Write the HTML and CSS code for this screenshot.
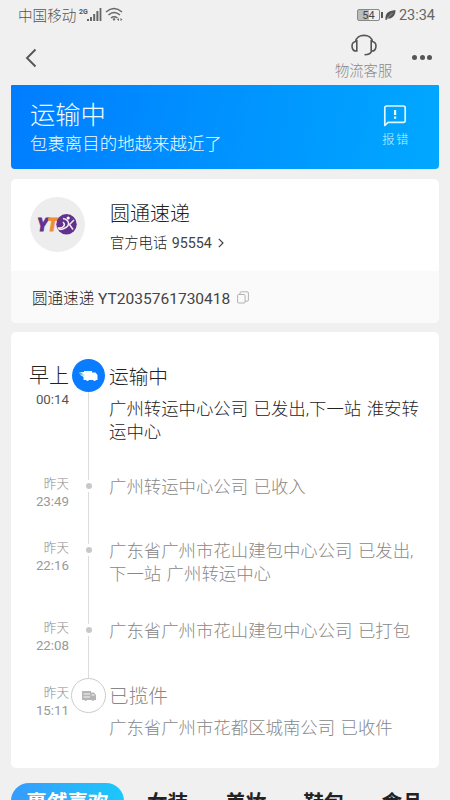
FILE: index.html
```html
<!DOCTYPE html>
<html lang="zh-CN">
<head>
<meta charset="utf-8">
<title>物流详情</title>
<link rel="stylesheet" href="styles.css">
</head>
<body>
<div class="screen">
  <header class="status">
    <span class="carrier">中国移动</span>
    <svg class="signal" width="48" height="16" viewBox="0 0 48 16">
      <text x="1" y="6.500" class="net">2G</text>
      <g fill="#666"><path d="M9 12h2v2H9zM12 10h2v4h-2zM15.200 7h2v7h-2zM18.400 4h2v10h-2zM21.600 1h1.800v13h-1.800z"/></g>
      <g fill="none" stroke="#666" stroke-width="1.500"><path d="M28 5q8-7 16 0M30.500 8q5.500-5 11.500 0M33 11q3-2.500 6.500 0"/></g>
      <path fill="#666" d="M34.500 12l1.500-1 1.500 1-1.500 2zM39 12.500l2-1.500v3zM44.500 12.500l-2-1.500v3z"/>
    </svg>
    <span class="space"></span>
    <span class="battery">54</span><span class="cap"></span>
    <svg class="leaf" width="11" height="12" viewBox="0 0 11 12"><path fill="#555" d="M.5 11C0 4 3 2 10.500 1 10.500 7 7 10 2.500 9.500L1.500 11z"/><path d="M2 9.500L7.500 4" stroke="#ccc" stroke-width=".6"/></svg>
    <span class="clock">23:34</span>
  </header>

  <nav class="navbar">
    <svg class="back" width="14" height="20" viewBox="0 0 14 20"><path d="M11.500 1.500L3 10l8.500 8.500" fill="none" stroke="#555" stroke-width="1.900"/></svg>
    <span class="space"></span>
    <div class="service">
      <svg width="26" height="22" viewBox="0 0 26 22" fill="none" stroke="#555" stroke-width="1.600">
        <path d="M4.500 8C5.500-.9 20.500-.9 21.500 8M5.800 7v10C0 17.500-.5 8.500 4.500 7.500zM20.200 7v10c5.800.5 6.300-8.500 1.300-9.500zM21 16.500c-1 3-3.500 4.300-7.500 4.300"/>
      </svg>
      <span>物流客服</span>
    </div>
    <div class="more"><i></i><i></i><i></i></div>
  </nav>

  <main>
    <section class="banner">
      <div class="banner-text">
        <h1>运输中</h1>
        <p>包裹离目的地越来越近了</p>
      </div>
      <div class="report">
        <svg width="24" height="24" viewBox="0 0 24 24"><path d="M1.800 21.500V3.800q0-1.800 1.800-1.800h16.800q1.800 0 1.800 1.800v12.700q0 1.800-1.800 1.800H5z" fill="none" stroke="#dff8ff" stroke-width="1.700" stroke-linejoin="round"/><path d="M11 6h2.200v5H11zM11 12.500h2.200v2.200H11z" fill="#e8fbff"/></svg>
        <span>报错</span>
      </div>
    </section>

    <section class="card courier">
      <div class="courier-top">
        <div class="logo">
          <svg width="55" height="55" viewBox="0 0 55 55">
            <text x="7" y="34" class="logo-y">Y</text><text x="17" y="34" class="logo-t">T</text>
            <circle cx="36.500" cy="27.300" r="10.200" fill="#63308c"/>
            <circle cx="38.200" cy="21" r="1.600" fill="#fff"/>
            <path d="M33 21.500q5 1 5.500 4.500t-4.500 5.500-5.500-.5q3 .5 5-1.500t-.5-4.500M44 23l-4.500 4.500L43 32.500" fill="none" stroke="#eee" stroke-width="1.500"/>
          </svg>
        </div>
        <div>
          <h2>圆通速递</h2>
          <p class="phone"><span>官方电话 <span class="num">95554</span></span> <svg width="6" height="10" viewBox="0 0 6 10"><path d="M.8.800L5 5 .8 9.200" fill="none" stroke="#444" stroke-width="1.200"/></svg></p>
        </div>
      </div>
      <div class="tracking">
        <span>圆通速递 <span class="num">YT2035761730418</span></span>
        <svg width="12" height="13" viewBox="0 0 12 13" fill="none" stroke="#aaa" stroke-width=".9"><rect x=".6" y="3.500" width="7.500" height="8.500" rx="1"/><path d="M3 3.500V2q0-1.200 1.200-1.200h6q1.200 0 1.200 1.200v7q0 1.200-1.200 1.200H8"/></svg>
      </div>
    </section>

    <section class="card timeline">
      <div class="row row-now">
        <div class="time"><b>早上</b><span>00:14</span></div>
        <div class="axis">
          <div class="node node-now"><svg width="20" height="14" viewBox="0 0 20 14"><path fill="#fff" d="M5 2h8v1.500h3.500l2 2.500v5H17q-1 2-3 0H10q-1.500 2-3 0H4.500V8L1 5.500h3L1 3h4z"/><path d="M0 4h4M1.500 6h4" stroke="#80dac0" stroke-width="1"/></svg></div>
          <div class="line"></div>
        </div>
        <div class="event"><h3>运输中</h3><p>广州转运中心公司 已发出,下一站 淮安转运中心</p></div>
      </div>
      <div class="row row-short">
        <div class="time"><span class="day">昨天</span><span>23:49</span></div>
        <div class="axis"><div class="lead"></div><div class="dot"></div><div class="line"></div></div>
        <div class="event"><p>广州转运中心公司 已收入</p></div>
      </div>
      <div class="row row-tall">
        <div class="time"><span class="day">昨天</span><span>22:16</span></div>
        <div class="axis"><div class="lead"></div><div class="dot"></div><div class="line"></div></div>
        <div class="event"><p>广东省广州市花山建包中心公司 已发出,下一站 广州转运中心</p></div>
      </div>
      <div class="row row-packed">
        <div class="time"><span class="day">昨天</span><span>22:08</span></div>
        <div class="axis"><div class="lead"></div><div class="dot"></div><div class="line"></div></div>
        <div class="event"><p>广东省广州市花山建包中心公司 已打包</p></div>
      </div>
      <div class="row row-first">
        <div class="time"><span class="day">昨天</span><span>15:11</span></div>
        <div class="axis">
          <div class="node node-first"><svg width="16" height="12" viewBox="0 0 16 12"><path fill="#b5b5b5" d="M1 1h9v1.500h3L15 5v5h-2q-1 1.800-2.500 0H6q-1.300 1.800-2.500 0H1z"/><path d="M2.500 4H9M2.500 7H9M10.500 5h3" stroke="#fff" stroke-width=".9"/></svg></div>
        </div>
        <div class="event"><h3>已揽件</h3><p>广东省广州市花都区城南公司 已收件</p></div>
      </div>
    </section>

    <div class="tabs">
      <span class="tab active">裹然喜欢</span>
      <span class="tab">女装</span>
      <span class="tab">美妆</span>
      <span class="tab">鞋包</span>
      <span class="tab">食品</span>
    </div>
  </main>
</div>
</body>
</html>
```
FILE: styles.css
```css
* { box-sizing: border-box; }
body, h1, h2, h3, p { margin: 0; font-weight: 300; }
body {
  background: #f0f0f0;
  color: #222;
  font-family: Roboto, "Noto Sans CJK SC", sans-serif;
}
svg { display: block; flex: none; }
.screen { height: 800px; overflow: hidden; }
.space { flex: 1; }
.num { font-weight: 400; color: #444; }

.status {
  display: flex;
  align-items: center;
  height: 30px;
  padding: 0 15px 0 18px;
  color: #555;
}
.carrier { padding-top: 2px; font-size: 14.600px; line-height: 20px; }
.signal { margin-left: 2px; }
.net { font: bold 7px Roboto, sans-serif; fill: #555; }
.battery {
  width: 23px;
  height: 12px;
  border: 1px solid #888;
  border-radius: 2px;
  background: linear-gradient(90deg, #bbb 54%, transparent 54%);
  color: #444;
  font-size: 11px;
  font-weight: 400;
  line-height: 11px;
  text-align: center;
}
.cap { width: 2px; height: 6px; margin-left: 1px; background: #555; }
.leaf { margin: 0 3px 0 2px; }
.clock { padding-top: 1px; font-size: 14.500px; font-weight: 400; color: #666; }

.navbar {
  display: flex;
  align-items: center;
  height: 55px;
  padding: 0 18px 0 24px;
}
.service { width: 58px; margin-right: 19px; color: #888; font-size: 14.300px; line-height: 20px; }
.service svg { margin: 0 auto 5px 16px; }
.service span { display: block; white-space: nowrap; }
.more { display: flex; gap: 2.500px; }
.more i { width: 5px; height: 5px; border-radius: 50%; background: #555; }

main { padding: 0 11px; }
.banner {
  display: flex;
  justify-content: space-between;
  height: 84px;
  padding: 14px 29px 0 19px;
  border-radius: 1px 1px 4px 4px;
  background: linear-gradient(100deg, #007dff, #00a8ff);
  color: #f4fdff;
}
.banner h1 { font-size: 25.300px; line-height: 34px; }
.banner p { font-size: 17.450px; line-height: 23px; }
.report { width: 28px; padding-top: 5px; color: #c8f0ff; font-size: 12.500px; line-height: 18px; letter-spacing: 1.500px; white-space: nowrap; }
.report svg { margin: 0 0 3px 1px; }
.report span { display: block; }

.card { border-radius: 5px; background: #fff; overflow: hidden; }
.courier { height: 144px; margin-top: 10px; }
.courier-top { display: flex; gap: 25px; height: 92px; padding: 18px 19px 0; }
.logo { width: 55px; height: 55px; border-radius: 50%; background: #ededed; }
.logo text { font: italic 900 18px Roboto, sans-serif; stroke-width: .8px; }
.logo-y { fill: #63308c; stroke: #63308c; }
.logo-t { fill: #f08c3c; stroke: #f08c3c; }
.courier h2 { padding-top: 1px; font-size: 20px; line-height: 32px; }
.phone { display: flex; align-items: center; gap: 6px; font-size: 14.300px; line-height: 26px; }
.phone .num { margin-left: 1px; }
.tracking {
  display: flex;
  align-items: center;
  gap: 7px;
  height: 52px;
  padding-left: 21px;
  background: #fafafa;
  font-size: 15.550px;
}

.timeline { height: 436px; margin-top: 9px; padding-top: 27px; }
.row { display: grid; grid-template-columns: 58px 39px 1fr; color: #888; }
.row-now { height: 114px; color: #222; }
.row-short { height: 64px; }
.row-tall { height: 80px; }
.row-packed { height: 61px; }
.time { display: flex; flex-direction: column; align-items: flex-end; padding-top: 2px; color: #999; font-size: 13.300px; line-height: 18px; font-weight: 400; }
.time b { color: #222; font-size: 20px; font-weight: 300; line-height: 29px; }
.time .day { color: #888; font-size: 12.600px; font-weight: 300; }
.row-now .time { padding-top: 3px; color: #555; }
.row-first .time { padding-top: 6px; }
.axis { display: flex; flex-direction: column; align-items: center; }
.line { flex: 1; width: 1px; background: #ddd; }
.lead { width: 1px; height: 7px; background: #ddd; }
.dot { width: 6px; height: 6px; margin: 3px 0; border-radius: 50%; background: #c8c8c8; }
.node { display: flex; align-items: center; justify-content: center; flex: none; border-radius: 50%; }
.node-now { width: 33px; height: 33px; background: #0a7cff; }
.node-first { width: 35px; height: 35px; border: 1px solid #ccc; }
.event { padding: 3px 10px 0 1px; font-size: 17.400px; line-height: 23px; word-spacing: 1.200px; }
.event h3 { font-size: 19.700px; line-height: 32px; margin-bottom: 4px; }

.tabs { display: flex; height: 37px; margin-top: 15px; }
.tab { margin-left: 37px; color: #222; font-size: 20.600px; font-weight: 700; line-height: 40px; }
.tab.active {
  width: 113px;
  margin: 0 -14px 0 0;
  border-radius: 18px;
  background: linear-gradient(90deg, #369bff, #1cc8fa);
  color: #fff;
  text-align: center;
}
```
